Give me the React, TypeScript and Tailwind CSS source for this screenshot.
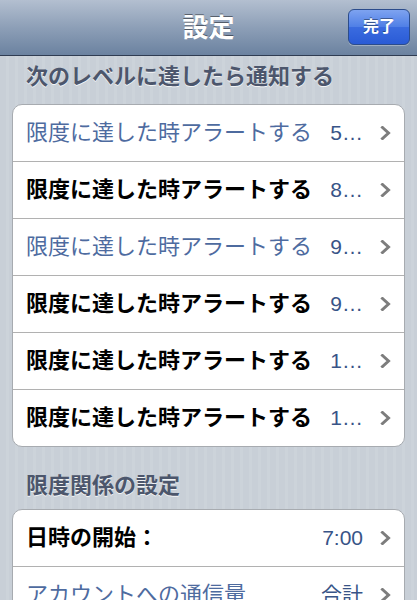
import React from "react";

const FONT = { fontFamily: '"Liberation Sans", "Noto Sans CJK JP", sans-serif' };

function Chevron() {
  return (
    <svg width="11" height="14" viewBox="0 0 11 14" className="shrink-0">
      <polyline points="2.5,1.5 8.5,7 2.5,12.5" fill="none" stroke="#7d7d7d" strokeWidth="3" strokeLinecap="square" strokeLinejoin="miter" />
    </svg>
  );
}

type Row = { label: string; value: string; blue?: boolean };

function Group({ rows, heights }: { rows: Row[]; heights: string }) {
  return (
    <div className="mx-[12px] rounded-[10px] border border-[#a7abb0] bg-white overflow-hidden">
      {rows.map((r, i) => (
        <div
          key={i}
          className={`flex items-center pl-[13px] pr-[13px] ${heights} ${i > 0 ? "border-t border-[#b1b1b1]" : ""}`}
        >
          <div
            className={`flex-1 min-w-0 whitespace-nowrap text-[22px] leading-[26px] ${
              r.blue ? "font-normal text-[#4e6b9f]" : "font-bold text-black"
            }`}
          >
            {r.label}
          </div>
          <div className="whitespace-nowrap text-[21px] leading-[26px] text-[#385487] mr-[17px] ml-[10px]">
            {r.value}
          </div>
          <Chevron />
        </div>
      ))}
    </div>
  );
}

export default function App() {
  const rows1: Row[] = [
    { label: "限度に達した時アラートする", value: "5…", blue: true },
    { label: "限度に達した時アラートする", value: "8…" },
    { label: "限度に達した時アラートする", value: "9…", blue: true },
    { label: "限度に達した時アラートする", value: "9…" },
    { label: "限度に達した時アラートする", value: "1…" },
    { label: "限度に達した時アラートする", value: "1…" },
  ];
  const rows2: Row[] = [
    { label: "日時の開始：", value: "7:00" },
    { label: "アカウントへの通信量", value: "合計", blue: true },
  ];
  return (
    <div
      style={FONT}
      className="w-[417px] h-[600px] overflow-hidden bg-[repeating-linear-gradient(90deg,#c8cfd7_0px,#c8cfd7_6px,#ccd3da_6px,#ccd3da_9px)]"
    >
      <div className="relative h-[56px] border-b border-[#2f3c52] bg-[linear-gradient(180deg,#b3bfd0_0%,#8d9fb7_50%,#6b82a0_100%)] flex items-center justify-center">
        <div className="text-[26px] font-bold text-white leading-[30px] [text-shadow:0_-1px_0_rgba(0,0,0,0.45)]">
          設定
        </div>
        <div className="absolute right-[7px] top-[9px] h-[36px] w-[62px] rounded-[6px] border border-[#2b4c8c] bg-[linear-gradient(180deg,#7ea3f0_0%,#4f7fe6_50%,#3a6bdf_51%,#2a5bd6_100%)] flex items-center justify-center shadow-[0_1px_0_rgba(255,255,255,0.3)]">
          <span className="text-[16px] font-bold text-white [text-shadow:0_-1px_0_rgba(0,0,0,0.4)]">完了</span>
        </div>
      </div>
      <div className="h-[48px] pt-[9px] pl-[26px] text-[22px] leading-[24px] font-bold text-[#4c566c] [text-shadow:0_1px_0_rgba(255,255,255,0.8)] whitespace-nowrap">
        次のレベルに達したら通知する
      </div>
      <Group rows={rows1} heights="h-[57px] first:h-[56px]" />
      <div className="h-[62px] pt-[27px] pl-[26px] text-[22px] leading-[24px] font-bold text-[#4c566c] [text-shadow:0_1px_0_rgba(255,255,255,0.8)] whitespace-nowrap">
        限度関係の設定
      </div>
      <Group rows={rows2} heights="h-[57px] first:h-[56px]" />
    </div>
  );
}
